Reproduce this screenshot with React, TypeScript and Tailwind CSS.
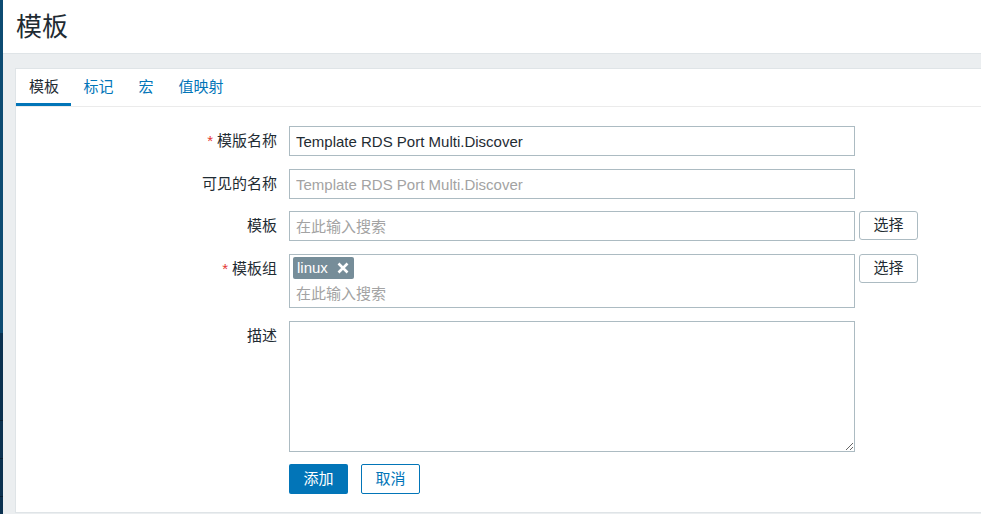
import React from 'react';

const font = 'font-["Liberation_Sans","Noto_Sans_CJK_SC",sans-serif]';

function Label({ text, required }: { text: string; required?: boolean }) {
  return (
    <div className="w-[261px] shrink-0 pt-[4px] text-right text-[15px] leading-[22px] text-[#1f2c33]">
      {required && <span className="mr-[4px] text-[#e33734]">*</span>}
      {text}
    </div>
  );
}

function SelectButton() {
  return (
    <button className="ml-[4px] h-[29px] w-[59px] shrink-0 rounded-[3px] border border-[#acbbc2] bg-white text-[15px] text-[#1f2c33]">
      选择
    </button>
  );
}

const inputCls =
  'h-[30px] w-[566px] shrink-0 border border-[#acbbc2] bg-white px-[6px] text-[15px] text-[#1f2c33] outline-none placeholder:text-[#a3a3a3]';

export default function App() {
  const tabs = ['模板', '标记', '宏', '值映射'];

  return (
    <div className={`flex h-[514px] w-[981px] overflow-hidden ${font}`}>
      {/* 左侧菜单边缘 */}
      <aside className="flex w-[3px] shrink-0 flex-col">
        <div className="h-[333px] bg-[#0d4b72]" />
        <div className="h-[88px] border-b border-[#071f33] bg-[#0b3150]" />
        <div className="h-[38px] border-b border-[#071f33] bg-[#0b3150]" />
        <div className="h-[38px] border-b border-[#071f33] bg-[#0b3150]" />
        <div className="flex-1 bg-[#0b3150]" />
      </aside>

      <div className="flex min-w-0 flex-1 flex-col bg-[#ebeef0]">
        <header className="flex h-[54px] shrink-0 items-center border-b border-[#dfe4e7] bg-white pl-[13px]">
          <h1 className="text-[26px] leading-none text-[#1f2c33]">模板</h1>
        </header>

        <main className="flex-1 pl-[12px] pt-[14px]">
          <div className="h-[445px] border-l border-t border-b border-[#dfe4e7] bg-white">
            {/* 标签页 */}
            <div className="flex h-[38px] border-b border-[#ebebeb]">
              {tabs.map((tab, i) => (
                <div
                  key={tab}
                  className={
                    i === 0
                      ? 'flex items-center border-b-[3px] border-[#0275b8] pl-[13px] pr-[12px] pt-[3px] text-[15px] text-[#1f2c33]'
                      : 'flex items-center border-b-[3px] border-transparent px-[12.5px] pt-[3px] text-[15px] text-[#0275b8]'
                  }
                >
                  {tab}
                </div>
              ))}
            </div>

            {/* 表单 */}
            <div className="flex flex-col pt-[19px]">
              <div className="flex gap-[12px]">
                <Label text="模版名称" required />
                <input className={inputCls} defaultValue="Template RDS Port Multi.Discover" />
              </div>

              <div className="mt-[13px] flex gap-[12px]">
                <Label text="可见的名称" />
                <input className={inputCls} placeholder="Template RDS Port Multi.Discover" />
              </div>

              <div className="mt-[12px] flex gap-[12px]">
                <Label text="模板" />
                <div className="flex">
                  <input className={inputCls} placeholder="在此输入搜索" />
                  <SelectButton />
                </div>
              </div>

              <div className="mt-[13px] flex gap-[12px]">
                <Label text="模板组" required />
                <div className="flex items-start">
                  <div className="flex h-[54px] w-[566px] flex-col border border-[#acbbc2] bg-white pl-[3px] pt-[2px]">
                    <span className="flex h-[22px] w-fit items-center rounded-[2px] bg-[#768d99] pl-[4px] pr-[5px] text-[15px] text-white">
                      linux
                      <svg className="ml-[9px]" width="12" height="12" viewBox="0 0 12 12">
                        <path d="M1.5 1.5L10.5 10.5M10.5 1.5L1.5 10.5" stroke="white" strokeWidth="2.6" />
                      </svg>
                    </span>
                    <input
                      className="h-[28px] w-full pl-[3px] text-[15px] text-[#1f2c33] outline-none placeholder:text-[#a3a3a3]"
                      placeholder="在此输入搜索"
                    />
                  </div>
                  <SelectButton />
                </div>
              </div>

              <div className="mt-[13px] flex gap-[12px]">
                <Label text="描述" />
                <textarea className="h-[131px] w-[566px] resize-y border border-[#acbbc2] bg-white px-[6px] text-[15px] outline-none" />
              </div>

              <div className="mt-[12px] flex gap-[13px] pl-[273px]">
                <button className="h-[30px] w-[59px] rounded-[2px] bg-[#0275b8] text-[15px] text-white">添加</button>
                <button className="h-[30px] w-[59px] rounded-[2px] border border-[#0275b8] bg-white text-[15px] text-[#0275b8]">
                  取消
                </button>
              </div>
            </div>
          </div>
        </main>
      </div>
    </div>
  );
}
